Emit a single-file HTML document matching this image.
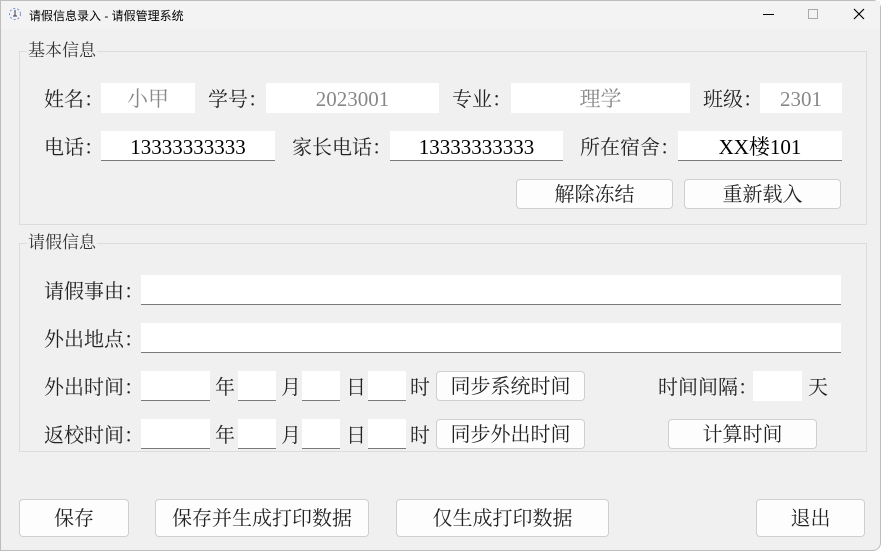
<!DOCTYPE html><html><head><meta charset="utf-8"><style>
*{margin:0;padding:0;box-sizing:border-box}
body{width:884px;height:554px;background:#fff;overflow:hidden;position:relative;font-family:"Liberation Serif","Noto Serif CJK SC",serif;color:#000}
.win{position:absolute;left:0;top:0;width:881px;height:551px;background:#f0f0f0;border:1px solid #bdbdbd;border-radius:0 8px 8px 0}
.tb{position:absolute;left:0;top:0;width:100%;height:28px;background:#f3f3f3}
.t{position:absolute;font-size:12px;font-family:"Liberation Sans","Noto Sans CJK SC",sans-serif;left:28px;top:6px}
.a{position:absolute}
.g{position:absolute;border:1px solid #dcdcdc}
.gl{position:absolute;background:#f0f0f0;font-size:17px;padding:0 1px;color:#333;line-height:20px}
.l{position:absolute;font-size:20px;line-height:22px;color:#222;white-space:nowrap;margin-top:2px}
.i{position:absolute;background:#fff;border-bottom:1px solid #7a7a7a;font-size:21px;text-align:center;line-height:32px;color:#000}
.d{border-bottom:none;color:#888}
.b{position:absolute;background:#fdfdfd;border:1px solid #cfcfcf;border-radius:4px;font-size:20px;text-align:center;color:#222}
</style></head><body><div class="win">
<div class="tb"><svg class="a" style="left:7px;top:6px" width="14" height="14"><circle cx="7" cy="7" r="5.5" fill="none" stroke="#6a8fd8" stroke-dasharray="2 2"/><path d="M7 3v6M5 9h4" stroke="#335" fill="none"/></svg><div class="t">请假信息录入 - 请假管理系统</div>
<div class="a" style="left:762px;top:13px;width:11px;height:1px;background:#000"></div>
<div class="a" style="left:807px;top:8px;width:10px;height:10px;border:1px solid #aaa"></div>
<svg class="a" style="left:852px;top:7px" width="12" height="12"><path d="M1 1L11 11M11 1L1 11" stroke="#000" stroke-width="1.2"/></svg></div>
</div>
<div class="g" style="left:19px;top:51px;width:848px;height:174px"></div>
<div class="gl" style="left:27px;top:41px">基本信息</div>
<div class="l" style="left:44px;top:87px">姓名：</div><div class="i d" style="left:101px;top:83px;width:94px;height:30px">小甲</div>
<div class="l" style="left:208px;top:87px">学号：</div><div class="i d" style="left:266px;top:83px;width:173px;height:30px">2023001</div>
<div class="l" style="left:452px;top:87px">专业：</div><div class="i d" style="left:511px;top:83px;width:179px;height:30px">理学</div>
<div class="l" style="left:703px;top:87px">班级：</div><div class="i d" style="left:760px;top:83px;width:82px;height:30px">2301</div>
<div class="l" style="left:44px;top:135px">电话：</div><div class="i" style="left:101px;top:131px;width:174px;height:30px">13333333333</div>
<div class="l" style="left:292px;top:135px">家长电话：</div><div class="i" style="left:390px;top:131px;width:173px;height:30px">13333333333</div>
<div class="l" style="left:580px;top:135px">所在宿舍：</div><div class="i" style="left:678px;top:131px;width:164px;height:30px">XX楼101</div>
<div class="b" style="left:516px;top:179px;width:157px;height:30px;line-height:30px">解除冻结</div>
<div class="b" style="left:684px;top:179px;width:157px;height:30px;line-height:30px">重新载入</div>
<div class="g" style="left:19px;top:243px;width:848px;height:209px"></div>
<div class="gl" style="left:27px;top:233px">请假信息</div>
<div class="l" style="left:44px;top:279px">请假事由：</div><div class="i" style="left:141px;top:275px;width:700px;height:30px"></div>
<div class="l" style="left:44px;top:327px">外出地点：</div><div class="i" style="left:141px;top:323px;width:700px;height:30px"></div>
<div class="l" style="left:44px;top:375px">外出时间：</div>
<div class="i" style="left:141px;top:371px;width:69px;height:30px"></div><div class="l" style="left:215px;top:375px">年</div>
<div class="i" style="left:238px;top:371px;width:38px;height:30px"></div><div class="l" style="left:281px;top:375px">月</div>
<div class="i" style="left:302px;top:371px;width:38px;height:30px"></div><div class="l" style="left:346px;top:375px">日</div>
<div class="i" style="left:368px;top:371px;width:38px;height:30px"></div><div class="l" style="left:410px;top:375px">时</div>
<div class="b" style="left:436px;top:371px;width:149px;height:30px;line-height:30px">同步系统时间</div>
<div class="l" style="left:658px;top:375px">时间间隔：</div><div class="i d" style="left:753px;top:371px;width:49px;height:30px"></div><div class="l" style="left:808px;top:375px">天</div>
<div class="l" style="left:44px;top:423px">返校时间：</div>
<div class="i" style="left:141px;top:419px;width:69px;height:30px"></div><div class="l" style="left:215px;top:423px">年</div>
<div class="i" style="left:238px;top:419px;width:38px;height:30px"></div><div class="l" style="left:281px;top:423px">月</div>
<div class="i" style="left:302px;top:419px;width:38px;height:30px"></div><div class="l" style="left:346px;top:423px">日</div>
<div class="i" style="left:368px;top:419px;width:38px;height:30px"></div><div class="l" style="left:410px;top:423px">时</div>
<div class="b" style="left:436px;top:419px;width:149px;height:30px;line-height:30px">同步外出时间</div>
<div class="b" style="left:668px;top:419px;width:149px;height:30px;line-height:30px">计算时间</div>
<div class="b" style="left:19px;top:499px;width:110px;height:38px;line-height:38px">保存</div>
<div class="b" style="left:155px;top:499px;width:214px;height:38px;line-height:38px">保存并生成打印数据</div>
<div class="b" style="left:396px;top:499px;width:213px;height:38px;line-height:38px">仅生成打印数据</div>
<div class="b" style="left:756px;top:499px;width:109px;height:38px;line-height:38px">退出</div>
</body></html>
